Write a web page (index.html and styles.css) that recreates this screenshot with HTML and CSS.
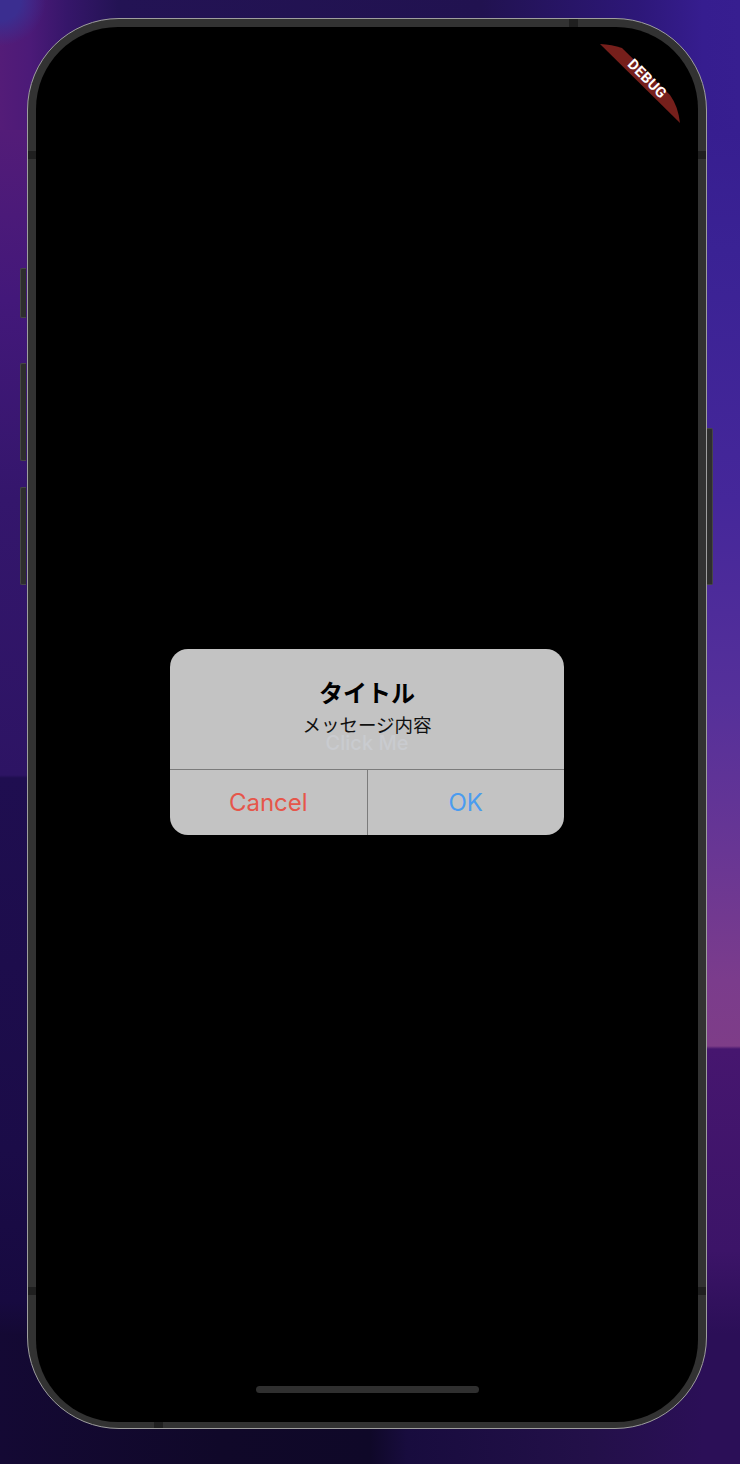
FILE: index.html
```html
<!DOCTYPE html>
<html lang="ja">
<head>
<meta charset="utf-8">
<title>Dialog</title>
<link rel="stylesheet" href="styles.css">
</head>
<body>
  <div class="phone">
    <span class="hw-btn hw-left hw-l1"></span>
    <span class="hw-btn hw-left hw-l2"></span>
    <span class="hw-btn hw-left hw-l3"></span>
    <span class="hw-btn hw-right hw-r1"></span>
    <span class="band band-top"></span>
    <span class="band band-bottom"></span>
    <span class="band band-side band-lt"></span>
    <span class="band band-side band-rt"></span>
    <span class="band band-side band-lb"></span>
    <span class="band band-side band-rb"></span>
    <div class="screen">
      <div class="dialog">
        <div class="dialog-body">
          <div class="title">タイトル</div>
          <div class="message">メッセージ内容</div>
          <div class="ghost">Click Me</div>
        </div>
        <div class="actions">
          <div class="action cancel">Cancel</div>
          <div class="action ok">OK</div>
        </div>
      </div>
      <div class="home-indicator"></div>
      <svg class="debug" viewBox="590 35 100 100" width="100" height="100">
        <path d="M600,44 Q612,44.5 622,48 L670,95 Q678,106 680,123 Z" fill="#761f1b"/>
        <text class="debug-text" x="647" y="79" transform="rotate(45 647 79)" text-anchor="middle" dominant-baseline="central">DEBUG</text>
      </svg>
    </div>
  </div>
</body>
</html>
```
FILE: styles.css
```css
html, body {
  margin: 0;
  padding: 0;
}

body {
  width: 740px;
  height: 1464px;
  overflow: hidden;
  font-family: Inter, "Noto Sans CJK JP", sans-serif;
  box-sizing: border-box;
  padding-top: 18px;
  padding-left: 27px;
  background-color: #1e0e4c;
  background-image:
    radial-gradient(circle 46px at 0 0, #3b2e90 0%, #3b2e90 45%, rgba(59, 46, 144, 0) 100%),
    linear-gradient(to right, #541c78 0%, #4c1a78 4%, #36166a 9%, #231354 16%, #211250 65%, #2d1778 86%, #361d8f 95%, #371e90 100%),
    linear-gradient(to right, #140934 0%, #100829 30%, #0f0828 50%, #180c3e 55%, #231049 80%, #2b0f57 95%, #2b0f57 100%),
    linear-gradient(to bottom, #34198c 0px, #371e90 130px, #3a2294 250px, #45279a 500px, #55309a 700px, #683694 850px, #7b3c8c 980px, #7e3d88 1046px, #46166f 1049px, #3c1468 1250px, #2b0f57 1334px, #221050 1464px),
    linear-gradient(to bottom, #541c78 0px, #531c78 130px, #43187a 300px, #34166c 500px, #2d1464 775px, #1f0e50 778px, #1b0c48 1150px, #170a40 1300px, #140934 1334px, #0e0728 1464px);
  background-size:
    92px 92px,
    740px 130px,
    740px 130px,
    40px 1464px,
    740px 1464px;
  background-position:
    0 0,
    0 0,
    0 100%,
    100% 0,
    0 0;
  background-repeat: no-repeat;
}

.phone {
  position: relative;
  width: 680px;
  height: 1411px;
  box-sizing: border-box;
  border: 1px solid #9e9e9e;
  border-radius: 92px;
  background: #323232;
  padding: 8px 8px 6px 8px;
}

.hw-btn {
  position: absolute;
  width: 6px;
  background: #2e2e2e;
  border: 1px solid #464646;
  box-sizing: border-box;
}

.hw-left {
  left: -8px;
  border-right: none;
  border-radius: 2px 0 0 2px;
}

.hw-right {
  right: -7px;
  border-left: none;
  border-radius: 0 2px 2px 0;
}

.hw-l1 { top: 249px; height: 50px; }
.hw-l2 { top: 344px; height: 98px; }
.hw-l3 { top: 468px; height: 98px; }
.hw-r1 { top: 409px; height: 157px; }

.band {
  position: absolute;
  background: #1f1f1f;
}

.band-top { top: 0; left: 541px; width: 9px; height: 8px; }
.band-bottom { bottom: 0; left: 126px; width: 9px; height: 6px; }
.band-side { width: 8px; height: 8px; }
.band-lt { left: 0; top: 132px; }
.band-rt { right: 0; top: 132px; }
.band-lb { left: 0; top: 1268px; }
.band-rb { right: 0; top: 1268px; }

.screen {
  position: relative;
  height: 1395px;
  background: #000;
  border-radius: 82px;
  overflow: hidden;
  display: flex;
  flex-direction: column;
}

.dialog {
  width: 394px;
  margin: 622px auto 0;
  background: #c3c3c3;
  border-radius: 18px;
  overflow: hidden;
}

.dialog-body {
  height: 121px;
  box-sizing: border-box;
  padding-top: 30px;
  border-bottom: 1px solid #7b7b7b;
  display: flex;
  flex-direction: column;
  align-items: center;
  text-align: center;
}

.title {
  font-family: Inter, "Noto Sans CJK JP", sans-serif;
  font-weight: 700;
  font-size: 24px;
  line-height: 30px;
  color: #000;
}

.message {
  margin-top: 6px;
  font-family: Inter, "Noto Sans CJK JP", sans-serif;
  font-size: 18.5px;
  line-height: 20px;
  color: #111;
}

.ghost {
  font-size: 20px;
  font-weight: 500;
  line-height: 16px;
  color: #c9cbcf;
}

.actions {
  display: flex;
  height: 65px;
}

.action {
  flex: 1;
  display: flex;
  align-items: center;
  justify-content: center;
  font-size: 24px;
  font-weight: 400;
}

.action + .action {
  border-left: 1px solid #7b7b7b;
}

.cancel { color: #e6564a; }
.ok { color: #4a9cf0; }

.home-indicator {
  width: 223px;
  height: 7px;
  margin: auto auto 29px;
  background: #2f2f2f;
  border-radius: 4px;
}

.debug {
  position: absolute;
  left: 554px;
  top: 8px;
}

.debug-text {
  font-family: Roboto, "DejaVu Sans", sans-serif;
  font-weight: 700;
  font-size: 14.5px;
  letter-spacing: 0.4px;
  fill: #ffffff;
}
```
